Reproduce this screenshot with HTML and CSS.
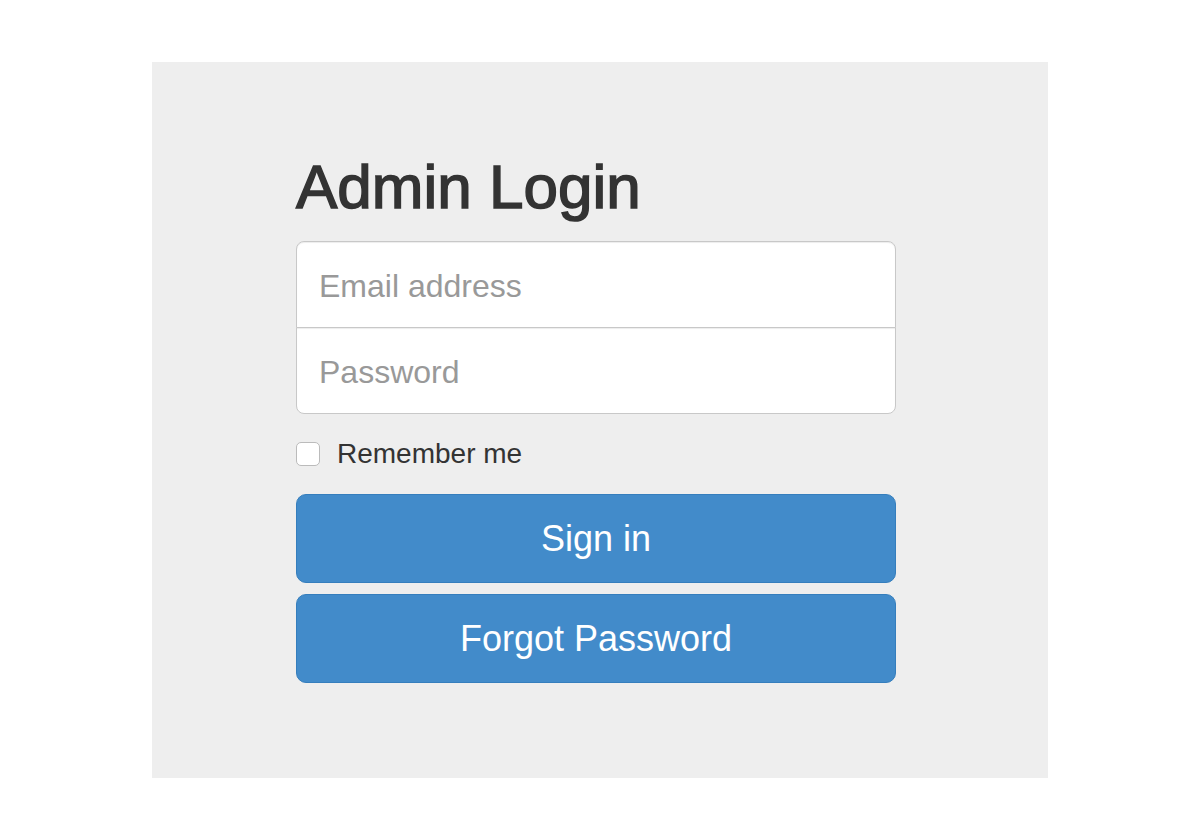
FILE: index.html
```html
<!DOCTYPE html>
<html lang="en">
<head>
    <meta charset="UTF-8">
    <meta name="viewport" content="width=device-width, initial-scale=1.0">
    <title>Admin Login</title>
    <link rel="stylesheet" href="styles.css">
</head>
<body>
    <section class="panel">
        <form class="form-signin">
            <h2 class="form-signin-heading">Admin Login</h2>
            <div class="input-group">
                <input type="email" class="form-control email" placeholder="Email address">
                <input type="password" class="form-control password" placeholder="Password">
            </div>
            <label class="checkbox">
                <input type="checkbox" value="remember-me">
                <span>Remember me</span>
            </label>
            <button class="btn" type="submit">Sign in</button>
            <button class="btn" type="button">Forgot Password</button>
        </form>
    </section>
</body>
</html>
```

FILE: styles.css
```css
*{
    margin: 0;
    padding: 0;
    box-sizing: border-box;
}

body{
    background: #fff;
    font-family: "Liberation Sans", Arial, sans-serif;
    color: #333;
}

.panel{
    width: 896px;
    height: 716px;
    margin: 62px auto 0;
    padding: 91px 0 0 144px;
    background: #eee;
}

.form-signin{
    width: 600px;
    display: flex;
    flex-direction: column;
}

/* medium weight look, the font only has regular/bold */
.form-signin-heading{
    font-size: 62px;
    line-height: 68px;
    font-weight: normal;
    color: #333;
    -webkit-text-stroke: 1.5px #333;
    margin-bottom: 20px;
}

.input-group{
    display: flex;
    flex-direction: column;
}

.form-control{
    display: block;
    width: 100%;
    height: 87px;
    padding: 3px 22px 0;
    font-family: inherit;
    font-size: 32px;
    color: #555;
    background: #fff;
    border: 1px solid #c8c8c8;
    box-shadow: inset 0 1px 1px rgba(0, 0, 0, .075);
    outline: none;
}

.form-control::placeholder{
    color: #999;
}

.form-control.email{
    border-radius: 8px 8px 0 0;
    margin-bottom: -1px;
}

.form-control.password{
    border-radius: 0 0 8px 8px;
}

.checkbox{
    display: flex;
    align-items: center;
    margin-top: 24px;
    font-size: 28px;
    color: #333;
}

.checkbox input{
    appearance: none;
    -webkit-appearance: none;
    width: 24px;
    height: 24px;
    margin-right: 17px;
    background: #fff;
    border: 1px solid #bbb;
    border-radius: 5px;
}

.btn{
    width: 100%;
    height: 89px;
    margin-top: 11px;
    font-family: inherit;
    font-size: 36px;
    color: #fff;
    background: #428bca;
    border: 1px solid #357ebd;
    border-radius: 10px;
}

.checkbox + .btn{
    margin-top: 24px;
}
```
